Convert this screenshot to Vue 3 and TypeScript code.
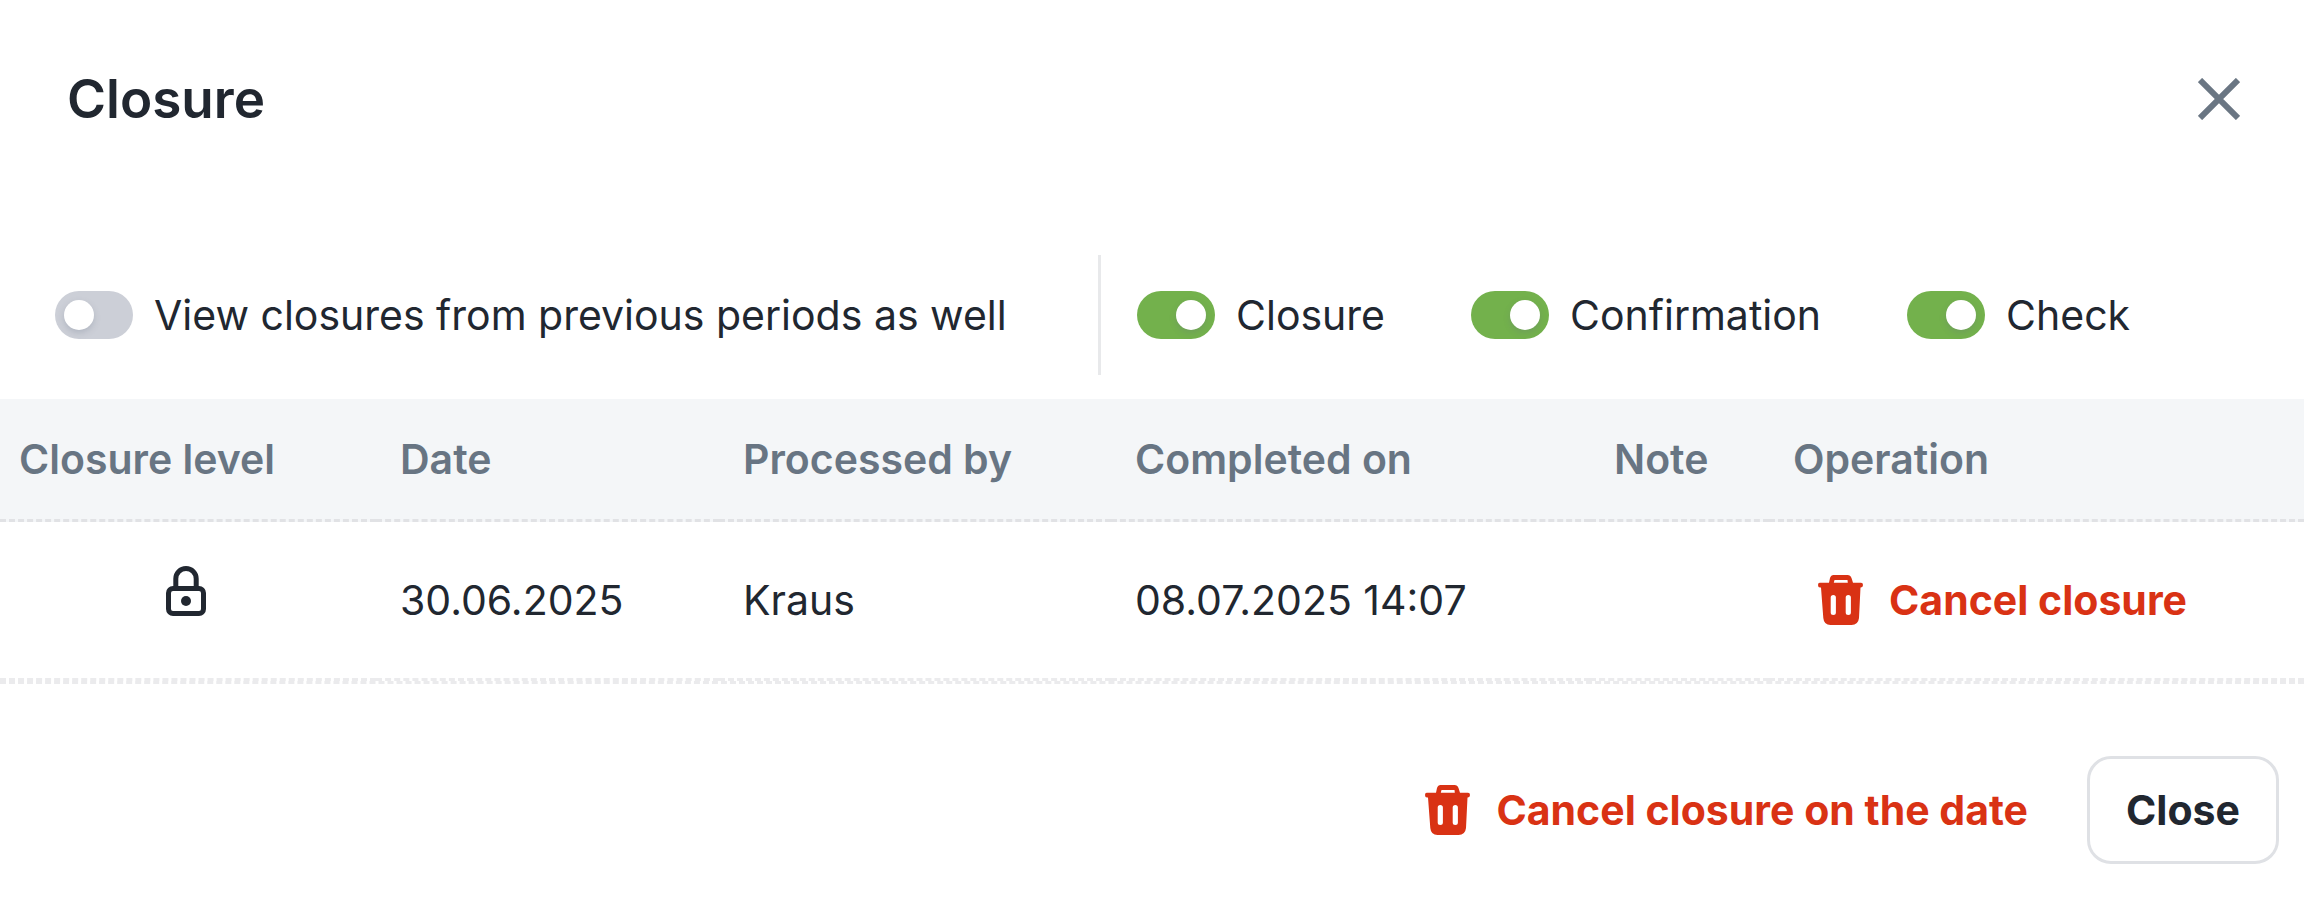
<script setup lang="ts">
import { ref } from 'vue'

interface Filter {
  id: string
  label: string
  on: boolean
}

interface Column {
  id: string
  label: string
}

interface ClosureRow {
  date: string
  processedBy: string
  completedOn: string
  note: string
}

const showPrevious = ref(false)

const filters = ref<Filter[]>([
  { id: 'closure', label: 'Closure', on: true },
  { id: 'confirmation', label: 'Confirmation', on: true },
  { id: 'check', label: 'Check', on: true },
])

const columns: Column[] = [
  { id: 'level', label: 'Closure level' },
  { id: 'date', label: 'Date' },
  { id: 'processed', label: 'Processed by' },
  { id: 'completed', label: 'Completed on' },
  { id: 'note', label: 'Note' },
  { id: 'operation', label: 'Operation' },
]

const rows: ClosureRow[] = [
  { date: '30.06.2025', processedBy: 'Kraus', completedOn: '08.07.2025 14:07', note: '' },
]
</script>

<template>
  <section class="dialog" role="dialog" aria-labelledby="dialog-title">
    <svg class="sprite" aria-hidden="true">
      <symbol id="trash" viewBox="0 0 45 50">
        <path
          fill-rule="evenodd"
          d="M15.500 0h14q3 0 4 3l1.500 4.700h8q2 0 2 2.300t-2 2.500h-.5L41 43q-.8 7-7.500 7H12.500Q6 50 5.300 43L3 12.500h-1q-2 0-2-2.500t2-2.300h9L12 3q1-3 3.500-3zM16.500 5l-.7 2.700h14L29.500 5zM15.300 20q-2.600 0-2.600 2.500v15q0 2.500 2.600 2.500t2.600-2.500v-15q0-2.500-2.600-2.500zM30.300 20q-2.600 0-2.600 2.500v15q0 2.500 2.600 2.500t2.600-2.500v-15q0-2.500-2.600-2.500z"
        />
      </symbol>
    </svg>

    <header class="header">
      <h1 id="dialog-title" class="title">Closure</h1>
      <button class="dismiss" type="button" aria-label="Dismiss">
        <svg class="dismiss-icon" viewBox="0 0 42 42" aria-hidden="true">
          <path d="M2 2l38 38M40 2L2 40" />
        </svg>
      </button>
    </header>

    <div class="filters">
      <div class="filter-main">
        <label class="toggle">
          <input v-model="showPrevious" class="switch" type="checkbox" />
          <span>View closures from previous periods as well</span>
        </label>
      </div>
      <div class="filter-list">
        <label v-for="f in filters" :key="f.id" class="toggle">
          <input v-model="f.on" class="switch" type="checkbox" />
          <span>{{ f.label }}</span>
        </label>
      </div>
    </div>

    <table class="table">
      <thead>
        <tr>
          <th v-for="c in columns" :key="c.id" :class="'col-' + c.id" scope="col">{{ c.label }}</th>
        </tr>
      </thead>
      <tbody>
        <tr v-for="(row, i) in rows" :key="i">
          <td class="level">
            <svg class="lock" viewBox="0 0 40 50" role="img" aria-label="Locked">
              <rect x="2.5" y="22.5" width="35" height="25" rx="4.500" />
              <path d="M9.800 22v-9.300a10.200 10.200 0 0 1 20.400 0V22" />
              <circle cx="20" cy="35" r="5" />
            </svg>
          </td>
          <td>{{ row.date }}</td>
          <td>{{ row.processedBy }}</td>
          <td>{{ row.completedOn }}</td>
          <td>{{ row.note }}</td>
          <td>
            <button class="danger" type="button">
              <svg class="trash" aria-hidden="true"><use href="#trash" /></svg>
              <span>Cancel closure</span>
            </button>
          </td>
        </tr>
      </tbody>
    </table>

    <footer class="footer">
      <button class="danger" type="button">
        <svg class="trash" aria-hidden="true"><use href="#trash" /></svg>
        <span>Cancel closure on the date</span>
      </button>
      <button class="close" type="button">Close</button>
    </footer>
  </section>
</template>

<style>
body {
  margin: 0;
  background: #ffffff;
}
</style>

<style scoped>
.dialog {
  color: #212730;
  font-family: Inter, 'Liberation Sans', sans-serif;
  font-size: 41px;
  line-height: 60px;
}

.sprite {
  display: none;
}

button {
  font: inherit;
  color: inherit;
  border: 0;
  background: none;
  cursor: pointer;
}

.header {
  display: flex;
  align-items: center;
  justify-content: space-between;
  padding: 60px 60px 60px 67px;
}

.title {
  margin: 0;
  font-size: 53px;
  line-height: 78px;
  font-weight: 600;
}

.dismiss {
  display: flex;
  padding: 4px;
}

.dismiss-icon {
  width: 42px;
  height: 42px;
  fill: none;
  stroke: #6a7683;
  stroke-width: 6;
}

.filters {
  display: flex;
  align-items: center;
  padding: 57px 55px 24px;
}

.filter-main {
  display: flex;
  align-items: center;
  box-sizing: border-box;
  width: 1046px;
  height: 120px;
  border-right: 3px solid #e8e9eb;
}

.filter-list {
  display: flex;
  gap: 86px;
  padding-left: 36px;
}

.toggle {
  display: flex;
  align-items: center;
  gap: 21px;
  white-space: nowrap;
  cursor: pointer;
}

.switch {
  appearance: none;
  display: flex;
  flex: none;
  box-sizing: border-box;
  width: 78px;
  height: 48px;
  margin: 0;
  padding: 9px;
  border-radius: 24px;
  background: #cccfd7;
  cursor: pointer;
}

.switch::before {
  content: '';
  width: 30px;
  height: 30px;
  border-radius: 50%;
  background: #ffffff;
  box-shadow: 0 3px 6px rgba(100, 110, 130, 0.25);
}

.switch:checked {
  justify-content: flex-end;
  background: #73b14c;
}

.table {
  width: 100%;
  border-collapse: separate;
  border-spacing: 0;
  border-bottom: 3px dashed #ebebed;
  table-layout: fixed;
}

th,
td {
  box-sizing: border-box;
  padding: 30px 0 30px 24px;
  border-bottom: 3px dashed #e1e2e5;
  text-align: left;
  vertical-align: middle;
  white-space: nowrap;
}

th {
  background: #f4f6f8;
  color: #687583;
  font-weight: 600;
}

td {
  padding-top: 48px;
  padding-bottom: 48px;
  border-color: #ebebed;
}

th:first-child {
  padding-left: 19px;
}

.col-level {
  width: 376px;
}

.col-date {
  width: 343px;
}

.col-processed {
  width: 392px;
}

.col-completed {
  width: 479px;
}

.col-note {
  width: 179px;
}

.level {
  padding: 0 4px 18px 0;
}

.lock {
  display: block;
  width: 40px;
  height: 50px;
  margin: 0 auto;
  fill: none;
  stroke: #212730;
  stroke-width: 5;
}

.lock circle {
  fill: #212730;
  stroke: none;
}

.danger {
  display: flex;
  align-items: center;
  gap: 26px;
  padding: 0 25px;
  color: #d93214;
  font-weight: 700;
}

.trash {
  width: 45px;
  height: 50px;
  fill: currentColor;
}

.footer {
  display: flex;
  align-items: center;
  justify-content: flex-end;
  gap: 34px;
  padding: 72px 25px 33px;
}

.close {
  padding: 21px 36px;
  border: 3px solid #dfe1e5;
  border-radius: 24px;
  font-weight: 700;
}
</style>
